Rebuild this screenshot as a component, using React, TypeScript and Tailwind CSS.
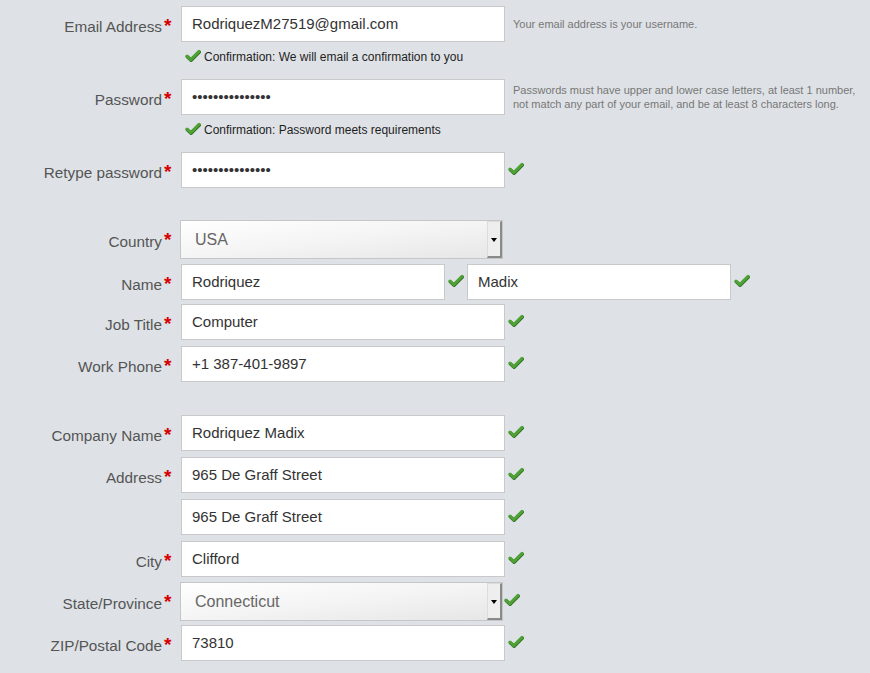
import React from "react";

const Check = ({ className = "" }: { className?: string }) => (
  <svg width="16" height="13" viewBox="0 0 16 13" className={className}>
    <path
      d="M2 7 L5.8 10.6 L14 2.4"
      fill="none"
      stroke="#2c6a1e"
      strokeWidth="3.4"
      strokeLinecap="round"
      strokeLinejoin="round"
      transform="translate(0.3,0.7)"
    />
    <path
      d="M2 7 L5.8 10.6 L14 2.4"
      fill="none"
      stroke="#4fa236"
      strokeWidth="3"
      strokeLinecap="round"
      strokeLinejoin="round"
    />
  </svg>
);

const Label = ({ text, h, req = true }: { text: string; h: string; req?: boolean }) => (
  <div className={`w-[181px] shrink-0 flex justify-end pr-[10px] ${h}`}>
    <div className="flex items-center pt-[5px] h-full">
      <span className="text-[15.3px] leading-[18px] text-[#555555] whitespace-nowrap">{text}</span>
    </div>
    <span className="w-[9px] pl-[2px] mt-[10px] text-[19px] leading-none font-bold text-[#d60000] self-start">
      {req ? "*" : ""}
    </span>
  </div>
);

const Field = ({ value, w = "w-[324px]" }: { value: string; w?: string }) => (
  <div
    className={`${w} h-[36px] shrink-0 bg-white border border-[#c9c9c9] pl-[10px] flex items-center text-[15px] text-[#333333] whitespace-nowrap overflow-hidden`}
  >
    {value}
  </div>
);

const Select = ({ value }: { value: string }) => (
  <div className="w-[323px] h-[39px] -ml-[1px] shrink-0 border border-[#c6c6c6] bg-gradient-to-br from-white via-[#f4f4f4] to-[#e6e6e6] flex items-stretch">
    <div className="flex-1 flex items-center pl-[14px] text-[16px] text-[#666666]">{value}</div>
    <div className="w-[15px] bg-[#eeeeee] border-l border-t border-[#dcdcdc] border-r-2 border-b-2 border-r-[#8a8a8a] border-b-[#8a8a8a] flex items-center justify-center">
      <div className="w-0 h-0 border-l-[3.5px] border-r-[3.5px] border-t-[4px] border-l-transparent border-r-transparent border-t-black mt-[2px]" />
    </div>
  </div>
);

export default function App() {
  return (
    <div className="min-h-[673px] w-full bg-[#dee2e6] pt-[6px] font-['Liberation_Sans',Arial,sans-serif]">
      {/* Email */}
      <div className="flex items-start">
        <Label text="Email Address" h="h-[36px]" />
        <Field value="RodriquezM27519@gmail.com" />
        <div className="ml-[8px] h-[36px] flex items-center text-[11px] leading-[14px] text-[#777777] whitespace-nowrap">
          Your email address is your username.
        </div>
      </div>
      <div className="mt-[5px] h-[20px] pl-[185px] flex items-center">
        <Check className="mb-[4px]" />
        <span className="ml-[3px] text-[12px] text-[#1e1e1e] whitespace-nowrap">
          Confirmation: We will email a confirmation to you
        </span>
      </div>

      {/* Password */}
      <div className="mt-[12px] flex items-start">
        <Label text="Password" h="h-[36px]" />
        <Field value="•••••••••••••••" />
        <div className="ml-[8px] h-[36px] flex items-center text-[11px] leading-[14px] text-[#777777] whitespace-nowrap">
          <div>
            Passwords must have upper and lower case letters, at least 1 number,
            <br />
            not match any part of your email, and be at least 8 characters long.
          </div>
        </div>
      </div>
      <div className="mt-[5px] h-[20px] pl-[185px] flex items-center">
        <Check className="mb-[4px]" />
        <span className="ml-[3px] text-[12px] text-[#1e1e1e] whitespace-nowrap">
          Confirmation: Password meets requirements
        </span>
      </div>

      {/* Retype */}
      <div className="mt-[12px] flex items-start">
        <Label text="Retype password" h="h-[36px]" />
        <Field value="•••••••••••••••" />
        <Check className="ml-[3px] mt-[10px]" />
      </div>

      {/* Country */}
      <div className="mt-[32px] flex items-start">
        <Label text="Country" h="h-[39px]" />
        <Select value="USA" />
      </div>

      {/* Name */}
      <div className="mt-[5px] flex items-start">
        <Label text="Name" h="h-[36px]" />
        <Field value="Rodriquez" w="w-[264px]" />
        <Check className="ml-[3px] mt-[10px]" />
        <div className="ml-[3px]">
          <Field value="Madix" w="w-[264px]" />
        </div>
        <Check className="ml-[3px] mt-[10px]" />
      </div>

      {/* Job Title */}
      <div className="mt-[4px] flex items-start">
        <Label text="Job Title" h="h-[36px]" />
        <Field value="Computer" />
        <Check className="ml-[3px] mt-[10px]" />
      </div>

      {/* Work Phone */}
      <div className="mt-[6px] flex items-start">
        <Label text="Work Phone" h="h-[36px]" />
        <Field value="+1 387-401-9897" />
        <Check className="ml-[3px] mt-[10px]" />
      </div>

      {/* Company */}
      <div className="mt-[33px] flex items-start">
        <Label text="Company Name" h="h-[36px]" />
        <Field value="Rodriquez Madix" />
        <Check className="ml-[3px] mt-[10px]" />
      </div>

      {/* Address */}
      <div className="mt-[6px] flex items-start">
        <Label text="Address" h="h-[36px]" />
        <Field value="965 De Graff Street" />
        <Check className="ml-[3px] mt-[10px]" />
      </div>
      <div className="mt-[6px] flex items-start">
        <Label text="" h="h-[36px]" req={false} />
        <Field value="965 De Graff Street" />
        <Check className="ml-[3px] mt-[10px]" />
      </div>

      {/* City */}
      <div className="mt-[6px] flex items-start">
        <Label text="City" h="h-[36px]" />
        <Field value="Clifford" />
        <Check className="ml-[3px] mt-[10px]" />
      </div>

      {/* State */}
      <div className="mt-[5px] flex items-start">
        <Label text="State/Province" h="h-[39px]" />
        <Select value="Connecticut" />
        <Check className="ml-[1px] mt-[11px]" />
      </div>

      {/* ZIP */}
      <div className="mt-[4px] flex items-start">
        <Label text="ZIP/Postal Code" h="h-[36px]" />
        <Field value="73810" />
        <Check className="ml-[3px] mt-[10px]" />
      </div>
    </div>
  );
}
